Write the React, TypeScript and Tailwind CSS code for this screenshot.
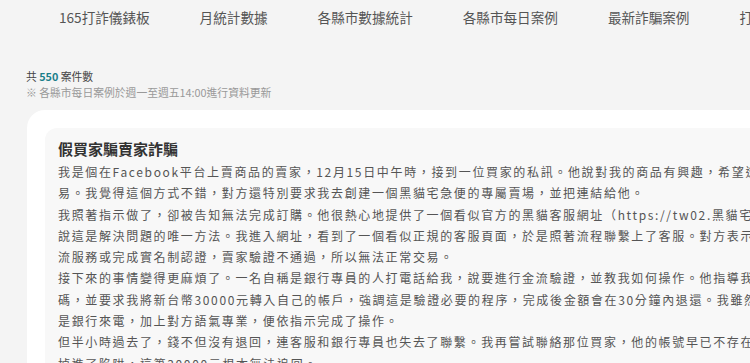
import React from 'react';

const tabs = ['165打詐儀錶板', '月統計數據', '各縣市數據統計', '各縣市每日案例', '最新詐騙案例', '打詐儀錶板說明'];

// each entry is one paragraph, split at the visual line breaks of the page
const story: string[][] = [
  [
    '我是個在Facebook平台上賣商品的賣家，12月15日中午時，接到一位買家的私訊。他說對我的商品有興趣，希望透過黑貓宅急便的賣貨便交',
    '易。我覺得這個方式不錯，對方還特別要求我去創建一個黑貓宅急便的專屬賣場，並把連結給他。',
  ],
  [
    '我照著指示做了，卻被告知無法完成訂購。他很熱心地提供了一個看似官方的黑貓客服網址（https://tw02.黑貓宅急便.com），並',
    '說這是解決問題的唯一方法。我進入網址，看到了一個看似正規的客服頁面，於是照著流程聯繫上了客服。對方表示，由於我沒有開通金',
    '流服務或完成實名制認證，賣家驗證不通過，所以無法正常交易。',
  ],
  [
    '接下來的事情變得更麻煩了。一名自稱是銀行專員的人打電話給我，說要進行金流驗證，並教我如何操作。他指導我輸入銀行帳號和驗證',
    '碼，並要求我將新台幣30000元轉入自己的帳戶，強調這是驗證必要的程序，完成後金額會在30分鐘內退還。我雖然有些懷疑，但因為',
    '是銀行來電，加上對方語氣專業，便依指示完成了操作。',
  ],
  [
    '但半小時過去了，錢不但沒有退回，連客服和銀行專員也失去了聯繫。我再嘗試聯絡那位買家，他的帳號早已不存在，我才意識到自己',
    '掉進了陷阱，這筆30000元根本無法追回。',
  ],
];

export default function App() {
  return (
    <div className="w-[750px] h-[363px] overflow-hidden bg-[#f4f4f4] font-['Noto_Sans_CJK_TC','Noto_Sans',sans-serif]">
      {/* Top nav */}
      <nav className="h-[35px] flex items-center gap-[50px] pl-[59px] text-[13.6px] text-[#555] whitespace-nowrap">
        {tabs.map((t) => (
          <span key={t}>{t}</span>
        ))}
      </nav>

      <div className="pt-[33px] pl-[26px]">
        <div className="text-[10.8px] leading-[16px] text-[#444]">
          共 <span className="font-bold text-[#1b7f8a]">550</span> 案件數
        </div>
        <div className="text-[10.8px] leading-[16px] text-[#999]">※ 各縣市每日案例於週一至週五14:00進行資料更新</div>

        {/* Case list */}
        <div className="mt-[10px] ml-px w-[800px] bg-white rounded-[18px] pt-[18px] pl-[18px]">
          <div className="bg-[#f8f8f8] rounded-[12px] pt-[10px] pl-[13px] pb-4">
            <h2 className="text-[15px] leading-[22px] font-bold text-[#333]">假買家騙賣家詐騙</h2>
            <div className="mt-px text-[12px] leading-[21.3px] tracking-[1.65px] text-[#555] whitespace-nowrap">
              {story.map((para, i) => (
                <p key={i}>
                  {para.map((line, j) => (
                    <span key={j} className="block">
                      {line}
                    </span>
                  ))}
                </p>
              ))}
            </div>
          </div>
        </div>
      </div>
    </div>
  );
}
